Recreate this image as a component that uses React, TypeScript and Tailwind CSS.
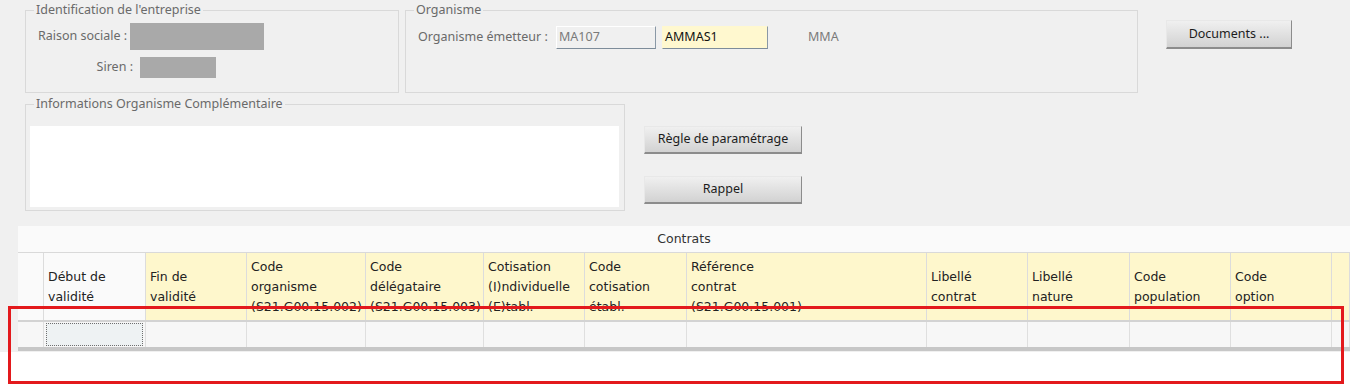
import React from "react";

const cols = [
  { w: "w-[26px]", lines: [] as string[], head: "bg-[#fafafa]" },
  { w: "w-[102px]", lines: ["Début de", "validité"], head: "bg-[#fafafa]", focus: true },
  { w: "w-[101px]", lines: ["Fin de", "validité"] },
  { w: "w-[119px]", lines: ["Code", "organisme", "(S21.G00.15.002)"] },
  { w: "w-[118px]", lines: ["Code", "délégataire", "(S21.G00.15.003)"] },
  { w: "w-[101px]", lines: ["Cotisation", "(I)ndividuelle", "(E)tabl."] },
  { w: "w-[102px]", lines: ["Code", "cotisation", "établ."] },
  { w: "w-[240px]", lines: ["Référence", "contrat", "(S21.G00.15.001)"] },
  { w: "w-[101px]", lines: ["Libellé", "contrat"] },
  { w: "w-[102px]", lines: ["Libellé", "nature"] },
  { w: "w-[101px]", lines: ["Code", "population"] },
  { w: "w-[101px]", lines: ["Code", "option"] },
  { w: "w-[18px]", lines: [] as string[] },
];

function WinButton({ label, className }: { label: string; className: string }) {
  return (
    <div
      className={`flex items-center justify-center bg-gradient-to-b from-[#f0f0f0] to-[#d2d2d2] border border-t-[#e8e8e8] border-l-[#e8e8e8] border-r-[#8c8c8c] border-b-[#8c8c8c] border-b-2 text-[12.5px] text-[#1c1c1c] ${className}`}
    >
      {label}
    </div>
  );
}

export default function App() {
  return (
    <div className="relative w-[1350px] h-[385px] overflow-hidden bg-white font-['Noto_Sans',sans-serif]">
      <div className="h-[352px] bg-[#f0f0f0]">
        {/* Row 1 */}
        <div className="flex pt-[2px] pl-[25px]">
          <fieldset className="w-[374px] h-[91px] border border-[#d9d9d9]">
            <legend className="ml-[8px] px-[2px] text-[12.5px] leading-[16px] text-[#6a6a6a]">
              Identification de l'entreprise
            </legend>
            <div className="flex items-center mt-[5px] pl-[12px] text-[12.5px] text-[#6a6a6a] whitespace-nowrap">
              <span className="w-[92px]">Raison sociale :</span>
              <div className="w-[134px] h-[27px] bg-[#a9a9a9]" />
            </div>
            <div className="flex items-center mt-[7px] text-[12.5px] text-[#6a6a6a] whitespace-nowrap">
              <span className="w-[107px] text-right">Siren :</span>
              <div className="ml-[7px] w-[76px] h-[21px] bg-[#a9a9a9]" />
            </div>
          </fieldset>

          <fieldset className="ml-[6px] w-[733px] h-[91px] border border-[#d9d9d9]">
            <legend className="ml-[8px] px-[2px] text-[12.5px] leading-[16px] text-[#6a6a6a]">
              Organisme
            </legend>
            <div className="flex items-center mt-[8px] pl-[12px] text-[12.5px] whitespace-nowrap">
              <span className="w-[138px] text-[#6a6a6a]">Organisme émetteur :</span>
              <div className="w-[100px] h-[23px] flex items-center pl-[2px] bg-[#f0f0f0] border border-t-white border-l-white border-r-[#8a98a6] border-b-[#7d8c9a] text-[#7a7a7a]">
                MA107
              </div>
              <div className="ml-[6px] w-[106px] h-[23px] flex items-center pl-[2px] bg-[#fff8cf] border border-t-[#fff8cf] border-l-[#fff8cf] border-r-[#8a98a6] border-b-[#7d8c9a] text-[#111]">
                AMMAS1
              </div>
              <span className="ml-[40px] text-[#7a7a7a]">MMA</span>
            </div>
          </fieldset>

          <WinButton label="Documents ..." className="ml-[28px] mt-[18px] w-[126px] h-[29px]" />
        </div>

        {/* Row 2 */}
        <div className="flex mt-[3px] pl-[25px]">
          <fieldset className="w-[600px] h-[115px] border border-[#d9d9d9]">
            <legend className="ml-[8px] px-[2px] text-[12.5px] leading-[16px] text-[#6a6a6a]">
              Informations Organisme Complémentaire
            </legend>
            <div className="ml-[4px] mt-[14px] w-[589px] h-[81px] bg-white" />
          </fieldset>
          <div className="ml-[19px] mt-[30px] flex flex-col gap-[22px]">
            <WinButton label="Règle de paramétrage" className="w-[158px] h-[28px]" />
            <WinButton label="Rappel" className="w-[158px] h-[28px]" />
          </div>
        </div>

        {/* Contrats grid */}
        <div className="mt-[15px] ml-[18px] w-[1332px] font-['DejaVu_Sans',sans-serif] text-[12.5px] text-[#222]">
          <div className="h-[27px] flex items-center justify-center bg-[#fafafa] border-b border-[#d9d9d9] text-[#333]">
            Contrats
          </div>
          <div className="flex h-[69px] border-b-2 border-[#d3d3d3]">
            {cols.map((c, i) => (
              <div
                key={i}
                className={`${c.w} shrink-0 h-full flex flex-col justify-center pl-[4px] overflow-hidden leading-[20px] whitespace-nowrap border-r border-[#dcdcdc] ${c.head ?? "bg-[#fef7cc]"}`}
              >
                {c.lines.map((l) => (
                  <span key={l}>{l}</span>
                ))}
              </div>
            ))}
          </div>
          <div className="flex h-[29px] border-b-4 border-[#c7c7c7]">
            {cols.map((c, i) => (
              <div
                key={i}
                className={`${c.w} shrink-0 h-full bg-[#f7f7f7] border-r border-[#dfdfdf] ${c.focus ? "pl-[2px] pr-[2px] py-[1px]" : ""}`}
              >
                {c.focus && <div className="h-full border border-dotted border-[#6f6f6f] bg-[#eef2f3]" />}
              </div>
            ))}
          </div>
        </div>
      </div>

      {/* red annotation frame */}
      <div className="absolute left-[8px] top-[306px] w-[1336px] h-[78px] border-[3px] border-[#e3191c]" />
    </div>
  );
}
